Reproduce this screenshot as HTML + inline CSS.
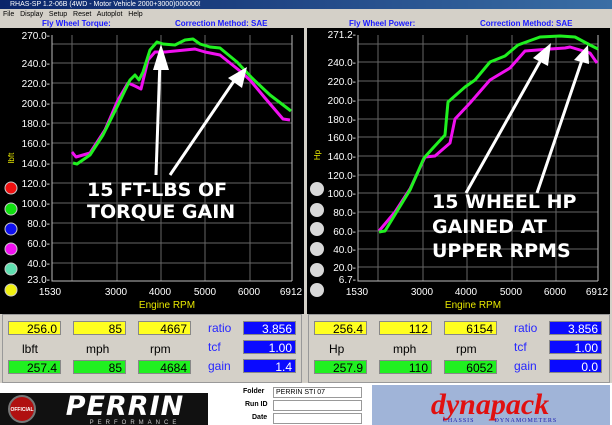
<!DOCTYPE html><html><head><style>
*{margin:0;padding:0;box-sizing:border-box}
body{width:612px;height:425px;overflow:hidden;background:#d4d0c8;font-family:"Liberation Sans",Arial,sans-serif;position:relative}
.a{position:absolute}
.tb{left:0;top:0;width:612px;height:9px;background:linear-gradient(90deg,#0a246a,#3a6ea5);color:#fff;font-size:7px;line-height:9px;padding-left:10px}
.mn{left:0;top:9px;width:612px;height:11px;font-size:7px;line-height:11px;color:#000}
.hd{font-size:8px;font-weight:bold;color:#1a1aff;top:19px}
.box{position:absolute;height:14px;font-size:12px;text-align:right;padding-right:3px;line-height:14px;color:#000;border:1px solid #888}
.y{background:#ffff20}.g{background:#20f020}.b{background:#0a0aff;color:#fff}
.lb{position:absolute;font-size:12px;color:#000}
.bl{position:absolute;font-size:12px;color:#2626ff}
.f{position:absolute;font-size:7px;font-weight:bold;color:#000}
.in{position:absolute;height:11px;background:#fff;border:1px solid #999;font-size:7px;line-height:9px;padding-left:2px}
</style></head><body>
<div class="a tb">RHAS-SP 1.2-06B (4WD - Motor Vehicle 2000+3000)000000!</div>
<div class="a mn"><span style="margin-left:3px">File</span>&nbsp;&nbsp; Display&nbsp;&nbsp; Setup&nbsp;&nbsp; Reset&nbsp;&nbsp; Autoplot&nbsp;&nbsp; Help</div>
<div class="a hd" style="left:42px">Fly Wheel Torque:</div>
<div class="a hd" style="left:175px">Correction Method: SAE</div>
<div class="a hd" style="left:349px">Fly Wheel Power:</div>
<div class="a hd" style="left:480px">Correction Method: SAE</div>
<svg class="a" style="left:0;top:0" width="612" height="425" xmlns="http://www.w3.org/2000/svg" font-family="Liberation Sans,Arial,sans-serif">
<rect x="0" y="28" width="304" height="286" fill="#000"/>
<rect x="307" y="28" width="303" height="286" fill="#000"/>
<g stroke="#666" stroke-width="1">
<line x1="52" y1="44" x2="292" y2="44"/><line x1="52" y1="63" x2="292" y2="63"/><line x1="52" y1="83" x2="292" y2="83"/><line x1="52" y1="103" x2="292" y2="103"/><line x1="52" y1="123" x2="292" y2="123"/><line x1="52" y1="143" x2="292" y2="143"/><line x1="52" y1="163" x2="292" y2="163"/><line x1="52" y1="183" x2="292" y2="183"/><line x1="52" y1="203" x2="292" y2="203"/><line x1="52" y1="223" x2="292" y2="223"/><line x1="52" y1="243" x2="292" y2="243"/><line x1="52" y1="263" x2="292" y2="263"/>
<line x1="72" y1="35" x2="72" y2="281"/><line x1="117" y1="35" x2="117" y2="281"/><line x1="161" y1="35" x2="161" y2="281"/><line x1="205" y1="35" x2="205" y2="281"/><line x1="250" y1="35" x2="250" y2="281"/>
<line x1="358" y1="44" x2="598" y2="44"/><line x1="358" y1="62" x2="598" y2="62"/><line x1="358" y1="81" x2="598" y2="81"/><line x1="358" y1="100" x2="598" y2="100"/><line x1="358" y1="119" x2="598" y2="119"/><line x1="358" y1="137" x2="598" y2="137"/><line x1="358" y1="156" x2="598" y2="156"/><line x1="358" y1="175" x2="598" y2="175"/><line x1="358" y1="193" x2="598" y2="193"/><line x1="358" y1="212" x2="598" y2="212"/><line x1="358" y1="231" x2="598" y2="231"/><line x1="358" y1="249" x2="598" y2="249"/><line x1="358" y1="267" x2="598" y2="267"/>
<line x1="378" y1="35" x2="378" y2="281"/><line x1="423" y1="35" x2="423" y2="281"/><line x1="467" y1="35" x2="467" y2="281"/><line x1="512" y1="35" x2="512" y2="281"/><line x1="556" y1="35" x2="556" y2="281"/>
</g>
<g stroke="#bbb" stroke-width="1" fill="none"><polyline points="52,35 52,281 292,281"/><line x1="292" y1="35" x2="292" y2="281"/><polyline points="358,35 358,281 598,281"/><line x1="598" y1="35" x2="598" y2="281"/></g>
<g fill="#fff" font-size="10" text-anchor="end">
<text x="50" y="39">270.0-</text><text x="50" y="67">240.0-</text><text x="50" y="87">220.0-</text><text x="50" y="107">200.0-</text><text x="50" y="127">180.0-</text><text x="50" y="147">160.0-</text><text x="50" y="167">140.0-</text><text x="50" y="187">120.0-</text><text x="50" y="207">100.0-</text><text x="50" y="227">80.0-</text><text x="50" y="247">60.0-</text><text x="50" y="267">40.0-</text><text x="50" y="283">23.0-</text>
<text x="356" y="38">271.2-</text><text x="356" y="66">240.0-</text><text x="356" y="85">220.0-</text><text x="356" y="104">200.0-</text><text x="356" y="123">180.0-</text><text x="356" y="141">160.0-</text><text x="356" y="160">140.0-</text><text x="356" y="179">120.0-</text><text x="356" y="197">100.0-</text><text x="356" y="216">80.0-</text><text x="356" y="235">60.0-</text><text x="356" y="253">40.0-</text><text x="356" y="271">20.0-</text><text x="356" y="283">6.7-</text>
</g>
<g fill="#fff" font-size="10" text-anchor="middle">
<text x="50" y="295">1530</text><text x="116" y="295">3000</text><text x="160" y="295">4000</text><text x="205" y="295">5000</text><text x="249" y="295">6000</text><text x="291" y="295">6912</text>
<text x="357" y="295">1530</text><text x="422" y="295">3000</text><text x="466" y="295">4000</text><text x="511" y="295">5000</text><text x="555" y="295">6000</text><text x="597" y="295">6912</text>
</g>
<g fill="#e8e800" font-size="10" text-anchor="middle"><text x="167" y="308">Engine RPM</text><text x="473" y="308">Engine RPM</text></g>
<text x="14" y="158" fill="#e8e800" font-size="8" transform="rotate(-90 14 158)" text-anchor="middle">lbft</text>
<text x="320" y="155" fill="#e8e800" font-size="8" transform="rotate(-90 320 155)" text-anchor="middle">Hp</text>
<g stroke="#ccc" stroke-width="1">
<circle cx="11" cy="188" r="6" fill="#f01010"/><circle cx="11" cy="209" r="6" fill="#10e010"/><circle cx="11" cy="229" r="6" fill="#1010f0"/><circle cx="11" cy="249" r="6" fill="#f010f0"/><circle cx="11" cy="269" r="6" fill="#60e0b0"/><circle cx="11" cy="290" r="6" fill="#f0f010"/>
</g>
<g fill="#d8d8d8"><circle cx="317" cy="189" r="7"/><circle cx="317" cy="210" r="7"/><circle cx="317" cy="229" r="7"/><circle cx="317" cy="249" r="7"/><circle cx="317" cy="270" r="7"/><circle cx="317" cy="290" r="7"/></g>
<g fill="none" stroke-width="3" stroke-linejoin="round">
<polyline stroke="#f010f0" points="72,152 76,157 90,153 105,130 118,100 128,83 135,86 141,89 148,60 155,52 165,52 185,50 195,49 205,52 220,55 240,71 250,80 265,98 283,119 290,120"/>
<polyline stroke="#20f020" points="73,163 77,164 90,155 103,135 117,107 130,80 135,75 139,80 143,72 150,50 157,42 163,44 175,45 185,40 193,39 200,44 210,47 220,48 237,62 252,78 270,95 291,111"/>
<polyline stroke="#f010f0" points="379,231 395,212 410,189 425,157 435,156 450,143 455,119 470,103 490,80 510,68 525,51 550,49 565,48 570,47 590,53 597,63"/>
<polyline stroke="#20f020" points="379,232 385,231 396,213 410,190 424,158 433,148 445,135 448,102 465,87 475,80 490,62 505,56 518,45 540,37 560,36 575,37 590,45 598,49"/>
</g>
<g stroke="#fff" stroke-width="3"><line x1="156" y1="175" x2="160" y2="60"/><line x1="170" y1="175" x2="236" y2="78"/><line x1="466" y1="193" x2="542" y2="58"/><line x1="537" y1="193" x2="582" y2="60"/></g>
<g fill="#fff">
<polygon points="161,44 153,70 169,70"/><polygon points="247,67 228,78 242,88"/>
<polygon points="551,43 533,58 548,66"/><polygon points="588,45 574,60 589,64"/>
</g>
<g fill="#fff" font-size="19" font-weight="bold" font-family="DejaVu Sans,Liberation Sans,sans-serif">
<text x="87" y="196">15 FT-LBS OF</text><text x="87" y="218">TORQUE GAIN</text>
<text x="432" y="208">15 WHEEL HP</text><text x="432" y="233">GAINED AT</text><text x="432" y="257">UPPER RPMS</text>
</g>
<rect x="2.5" y="314.5" width="299" height="68" fill="none" stroke="#999"/>
<rect x="308.5" y="314.5" width="301" height="68" fill="none" stroke="#999"/>
<rect x="0" y="383" width="612" height="42" fill="#fff"/>
<rect x="0" y="393" width="208" height="32" fill="#111"/>
<circle cx="22" cy="409" r="13" fill="#b01010" stroke="#777" stroke-width="2"/>
<text x="22" y="411" fill="#fff" font-size="5" text-anchor="middle" font-weight="bold">OFFICIAL</text>
<text x="125" y="415" fill="#fff" font-size="27" font-weight="bold" font-style="italic" text-anchor="middle" letter-spacing="1" font-family="DejaVu Sans,sans-serif">PERRIN</text>
<text x="135" y="424" fill="#ccc" font-size="6" text-anchor="middle" letter-spacing="4">PERFORMANCE</text>
<rect x="372" y="385" width="238" height="40" fill="#a0b4d8"/>
<text x="490" y="414" fill="#e01010" font-size="30" font-weight="bold" font-style="italic" font-family="Liberation Serif,serif" text-anchor="middle">dynapack</text>
<text x="500" y="422" fill="#1a1ab0" font-size="6" text-anchor="middle" font-family="Liberation Serif,serif" letter-spacing="1">CHASSIS &#160;&#160;&#160;&#160;&#160;&#160; DYNAMOMETERS</text>
</svg>
<div class="box y" style="left:8px;top:321px;width:53px">256.0</div>
<div class="box y" style="left:73px;top:321px;width:53px">85</div>
<div class="box y" style="left:138px;top:321px;width:53px">4667</div>
<div class="box g" style="left:8px;top:360px;width:53px">257.4</div>
<div class="box g" style="left:73px;top:360px;width:53px">85</div>
<div class="box g" style="left:138px;top:360px;width:53px">4684</div>
<div class="box b" style="left:243px;top:321px;width:53px">3.856</div>
<div class="box b" style="left:243px;top:340px;width:53px">1.00</div>
<div class="box b" style="left:243px;top:359px;width:53px">1.4</div>
<div class="lb" style="left:22px;top:342px">lbft</div><div class="lb" style="left:86px;top:342px">mph</div><div class="lb" style="left:150px;top:342px">rpm</div>
<div class="bl" style="left:208px;top:321px">ratio</div><div class="bl" style="left:208px;top:340px">tcf</div><div class="bl" style="left:208px;top:359px">gain</div>
<div class="box y" style="left:314px;top:321px;width:53px">256.4</div>
<div class="box y" style="left:379px;top:321px;width:53px">112</div>
<div class="box y" style="left:444px;top:321px;width:53px">6154</div>
<div class="box g" style="left:314px;top:360px;width:53px">257.9</div>
<div class="box g" style="left:379px;top:360px;width:53px">110</div>
<div class="box g" style="left:444px;top:360px;width:53px">6052</div>
<div class="box b" style="left:549px;top:321px;width:53px">3.856</div>
<div class="box b" style="left:549px;top:340px;width:53px">1.00</div>
<div class="box b" style="left:549px;top:359px;width:53px">0.0</div>
<div class="lb" style="left:329px;top:342px">Hp</div><div class="lb" style="left:393px;top:342px">mph</div><div class="lb" style="left:456px;top:342px">rpm</div>
<div class="bl" style="left:514px;top:321px">ratio</div><div class="bl" style="left:514px;top:340px">tcf</div><div class="bl" style="left:514px;top:359px">gain</div>
<div class="f" style="left:243px;top:388px">Folder</div><div class="f" style="left:245px;top:401px">Run ID</div><div class="f" style="left:252px;top:414px">Date</div>
<div class="in" style="left:273px;top:387px;width:89px">PERRIN STI 07</div>
<div class="in" style="left:273px;top:400px;width:89px"></div>
<div class="in" style="left:273px;top:413px;width:89px"></div>
</body></html>
